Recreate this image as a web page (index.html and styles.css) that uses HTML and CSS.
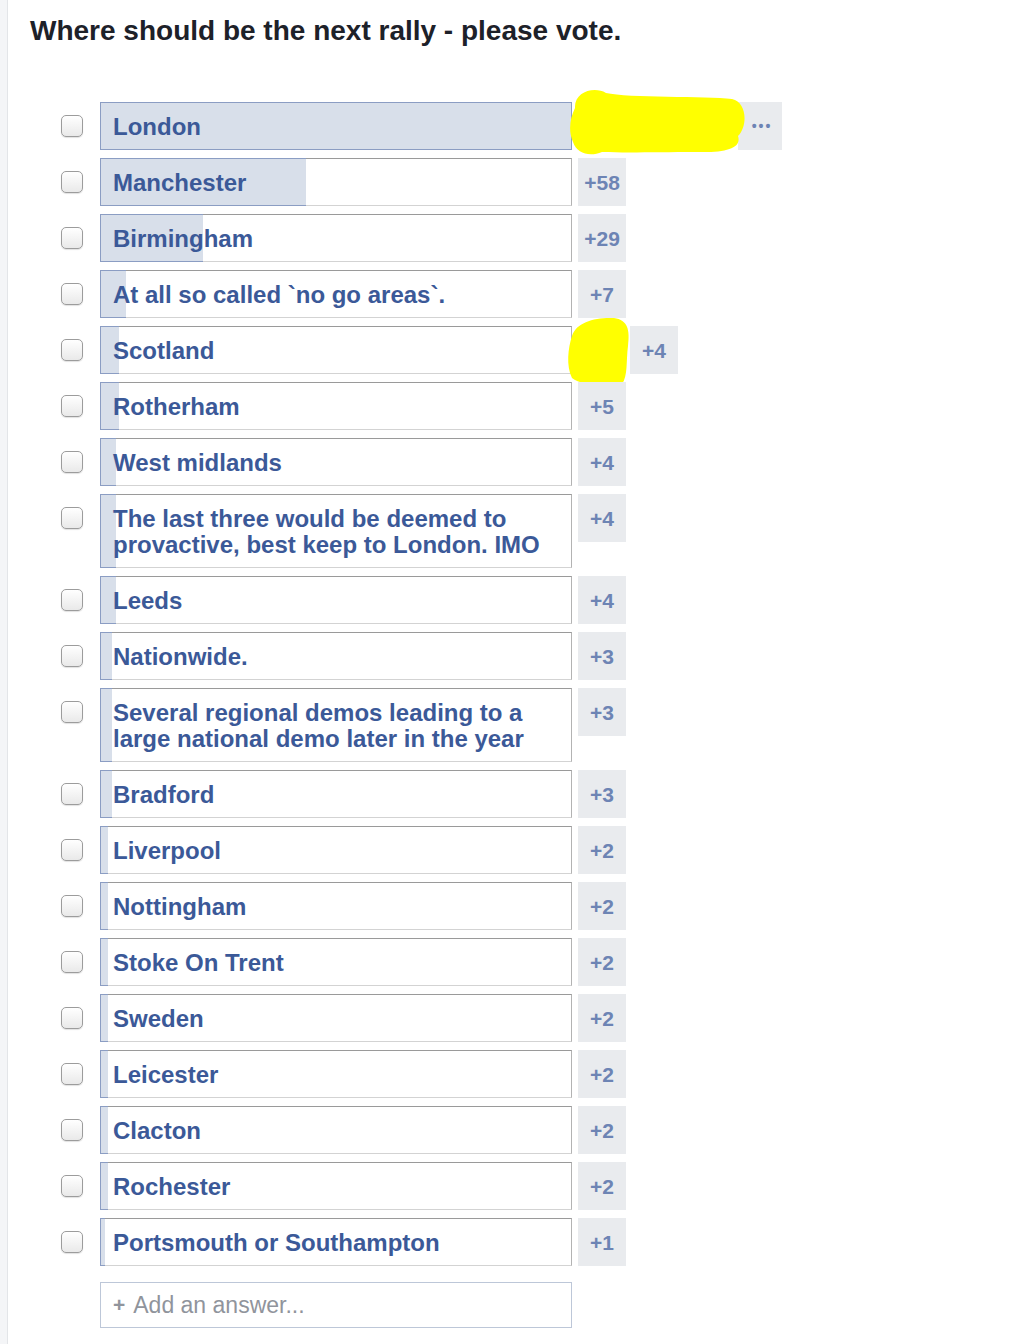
FILE: index.html
```html
<!DOCTYPE html>
<html lang="en">
<head>
    <meta charset="UTF-8">
    <meta name="viewport" content="width=device-width, initial-scale=1.0">
    <title>Poll - next rally</title>
    <link rel="stylesheet" href="styles.css">
</head>
<body>
    <div class="page">
        <div class="side-strip"></div>

        <div class="content">
            <h1 class="question">Where should be the next rally - please vote.</h1>

            <div class="poll">
                <div class="option">
                    <span class="check"></span>
                    <div class="answer full">
                        <span class="fill" style="width: 100%"></span>
                        <span class="label">London</span>
                    </div>
                    <div class="counts">
                        <span class="faces wide"></span>
                        <span class="count more">&bull;&bull;&bull;</span>
                        <svg class="scribble london" viewBox="0 0 179 70" width="179" height="70">
                            <path d="M9 22 C8 6 28 0 40 7 C62 12 140 10 166 13 C181 16 182 40 172 50 C176 62 160 67 130 66 C92 66 62 67 36 66 C24 71 11 68 7 56 C2 45 4 32 9 22 Z"/>
                        </svg>
                    </div>
                </div>

                <div class="option">
                    <span class="check"></span>
                    <div class="answer">
                        <span class="fill" style="width: 43.6%"></span>
                        <span class="label">Manchester</span>
                    </div>
                    <div class="counts"><span class="count">+58</span></div>
                </div>

                <div class="option">
                    <span class="check"></span>
                    <div class="answer">
                        <span class="fill" style="width: 21.8%"></span>
                        <span class="label">Birmingham</span>
                    </div>
                    <div class="counts"><span class="count">+29</span></div>
                </div>

                <div class="option">
                    <span class="check"></span>
                    <div class="answer">
                        <span class="fill" style="width: 5.3%"></span>
                        <span class="label">At all so called `no go areas`.</span>
                    </div>
                    <div class="counts"><span class="count">+7</span></div>
                </div>

                <div class="option">
                    <span class="check"></span>
                    <div class="answer">
                        <span class="fill" style="width: 3.8%"></span>
                        <span class="label">Scotland</span>
                    </div>
                    <div class="counts">
                        <span class="faces"></span>
                        <span class="count">+4</span>
                        <svg class="scribble scotland" viewBox="0 0 64 70" width="64" height="70">
                            <path d="M6 20 C10 6 30 1 48 2 C62 4 64 14 62 30 C60 45 62 60 56 68 C40 70 15 70 6 62 C0 50 2 32 6 20 Z"/>
                        </svg>
                    </div>
                </div>

                <div class="option">
                    <span class="check"></span>
                    <div class="answer">
                        <span class="fill" style="width: 3.8%"></span>
                        <span class="label">Rotherham</span>
                    </div>
                    <div class="counts"><span class="count">+5</span></div>
                </div>

                <div class="option">
                    <span class="check"></span>
                    <div class="answer">
                        <span class="fill" style="width: 3.2%"></span>
                        <span class="label">West midlands</span>
                    </div>
                    <div class="counts"><span class="count">+4</span></div>
                </div>

                <div class="option">
                    <span class="check"></span>
                    <div class="answer">
                        <span class="fill" style="width: 3.2%"></span>
                        <span class="label">The last three would be deemed to provactive, best keep to London. IMO</span>
                    </div>
                    <div class="counts"><span class="count">+4</span></div>
                </div>

                <div class="option">
                    <span class="check"></span>
                    <div class="answer">
                        <span class="fill" style="width: 3.2%"></span>
                        <span class="label">Leeds</span>
                    </div>
                    <div class="counts"><span class="count">+4</span></div>
                </div>

                <div class="option">
                    <span class="check"></span>
                    <div class="answer">
                        <span class="fill" style="width: 2.3%"></span>
                        <span class="label">Nationwide.</span>
                    </div>
                    <div class="counts"><span class="count">+3</span></div>
                </div>

                <div class="option">
                    <span class="check"></span>
                    <div class="answer">
                        <span class="fill" style="width: 2.3%"></span>
                        <span class="label">Several regional demos leading to a large national demo later in the year</span>
                    </div>
                    <div class="counts"><span class="count">+3</span></div>
                </div>

                <div class="option">
                    <span class="check"></span>
                    <div class="answer">
                        <span class="fill" style="width: 2.3%"></span>
                        <span class="label">Bradford</span>
                    </div>
                    <div class="counts"><span class="count">+3</span></div>
                </div>

                <div class="option">
                    <span class="check"></span>
                    <div class="answer">
                        <span class="fill" style="width: 1.5%"></span>
                        <span class="label">Liverpool</span>
                    </div>
                    <div class="counts"><span class="count">+2</span></div>
                </div>

                <div class="option">
                    <span class="check"></span>
                    <div class="answer">
                        <span class="fill" style="width: 1.5%"></span>
                        <span class="label">Nottingham</span>
                    </div>
                    <div class="counts"><span class="count">+2</span></div>
                </div>

                <div class="option">
                    <span class="check"></span>
                    <div class="answer">
                        <span class="fill" style="width: 1.5%"></span>
                        <span class="label">Stoke On Trent</span>
                    </div>
                    <div class="counts"><span class="count">+2</span></div>
                </div>

                <div class="option">
                    <span class="check"></span>
                    <div class="answer">
                        <span class="fill" style="width: 1.5%"></span>
                        <span class="label">Sweden</span>
                    </div>
                    <div class="counts"><span class="count">+2</span></div>
                </div>

                <div class="option">
                    <span class="check"></span>
                    <div class="answer">
                        <span class="fill" style="width: 1.5%"></span>
                        <span class="label">Leicester</span>
                    </div>
                    <div class="counts"><span class="count">+2</span></div>
                </div>

                <div class="option">
                    <span class="check"></span>
                    <div class="answer">
                        <span class="fill" style="width: 1.5%"></span>
                        <span class="label">Clacton</span>
                    </div>
                    <div class="counts"><span class="count">+2</span></div>
                </div>

                <div class="option">
                    <span class="check"></span>
                    <div class="answer">
                        <span class="fill" style="width: 1.5%"></span>
                        <span class="label">Rochester</span>
                    </div>
                    <div class="counts"><span class="count">+2</span></div>
                </div>

                <div class="option">
                    <span class="check"></span>
                    <div class="answer">
                        <span class="fill" style="width: 0.8%"></span>
                        <span class="label">Portsmouth or Southampton</span>
                    </div>
                    <div class="counts"><span class="count">+1</span></div>
                </div>

                <!-- new answer -->
                <div class="add-answer">
                    <span class="plus">+</span>
                    <span class="add-text">Add an answer...</span>
                </div>
            </div>
        </div>
    </div>
</body>
</html>
```

FILE: styles.css
```css
body {
    margin: 0;
    font-family: "Liberation Sans", Arial, sans-serif;
    background: #fff;
}
.page {
    display: flex;
    min-height: 1344px;
}
.side-strip {
    width: 7px;
    background: #f4f5f7;
    border-right: 1px solid #e3e5e8;
}
.content {
    flex: 1;
    padding-top: 14px;
}
.question {
    margin: 0 0 54px 22px;
    font-size: 28px;
    line-height: 34px;
    font-weight: bold;
    color: #1d2129;
}
.poll {
    padding-left: 53px;
}
.option {
    display: flex;
    align-items: flex-start;
    margin-bottom: 8px;
}
.check {
    width: 20px;
    height: 20px;
    margin-top: 13px;
    margin-right: 17px;
    border: 1px solid #9c9c9c;
    border-radius: 5px;
    background: linear-gradient(#ffffff, #e9e9e9);
    box-shadow: 0 1px 1px rgba(0, 0, 0, 0.12);
    flex-shrink: 0;
}
.answer {
    position: relative;
    width: 472px;
    box-sizing: border-box;
    padding: 11px 12px 9px 12px;
    border: 1px solid #b3b3b3;
    border-top-color: #9a9a9a;
    border-bottom-color: #d3d3d3;
    background: #fff;
    font-size: 24px;
    line-height: 26px;
    font-weight: bold;
    color: #3b5998;
}
.answer.full {
    border-color: #8b9dc3;
}
.fill {
    position: absolute;
    top: -1px;
    bottom: -1px;
    left: -1px;
    background: #d8dfea;
    border-top: 1px solid #8b9dc3;
    border-bottom: 1px solid #8b9dc3;
    border-left: 1px solid #8b9dc3;
}
.label {
    position: relative;
    display: block;
}
.counts {
    position: relative;
    display: flex;
    gap: 4px;
    margin-left: 6px;
}
.faces {
    width: 48px;
    height: 48px;
}
.faces.wide {
    width: 156px;
}
.count {
    width: 48px;
    height: 48px;
    line-height: 49px;
    text-align: center;
    background: #e9ebee;
    color: #6d84b4;
    font-size: 21px;
    font-weight: bold;
}
.count.more {
    width: 44px;
    font-size: 14px;
    letter-spacing: 2px;
    padding-left: 4px;
    box-sizing: border-box;
}
.scribble {
    position: absolute;
    fill: #ffff00;
}
.scribble.london {
    left: -12px;
    top: -16px;
}
.scribble.scotland {
    left: -12px;
    top: -10px;
}
.add-answer {
    width: 472px;
    height: 46px;
    box-sizing: border-box;
    margin-top: 16px;
    margin-left: 39px;
    padding: 0 12px;
    border: 1px solid #bdc7d8;
    display: flex;
    align-items: center;
    font-size: 23px;
    color: #90949c;
}
.plus {
    font-weight: bold;
    font-size: 21px;
    margin-right: 8px;
}
```
